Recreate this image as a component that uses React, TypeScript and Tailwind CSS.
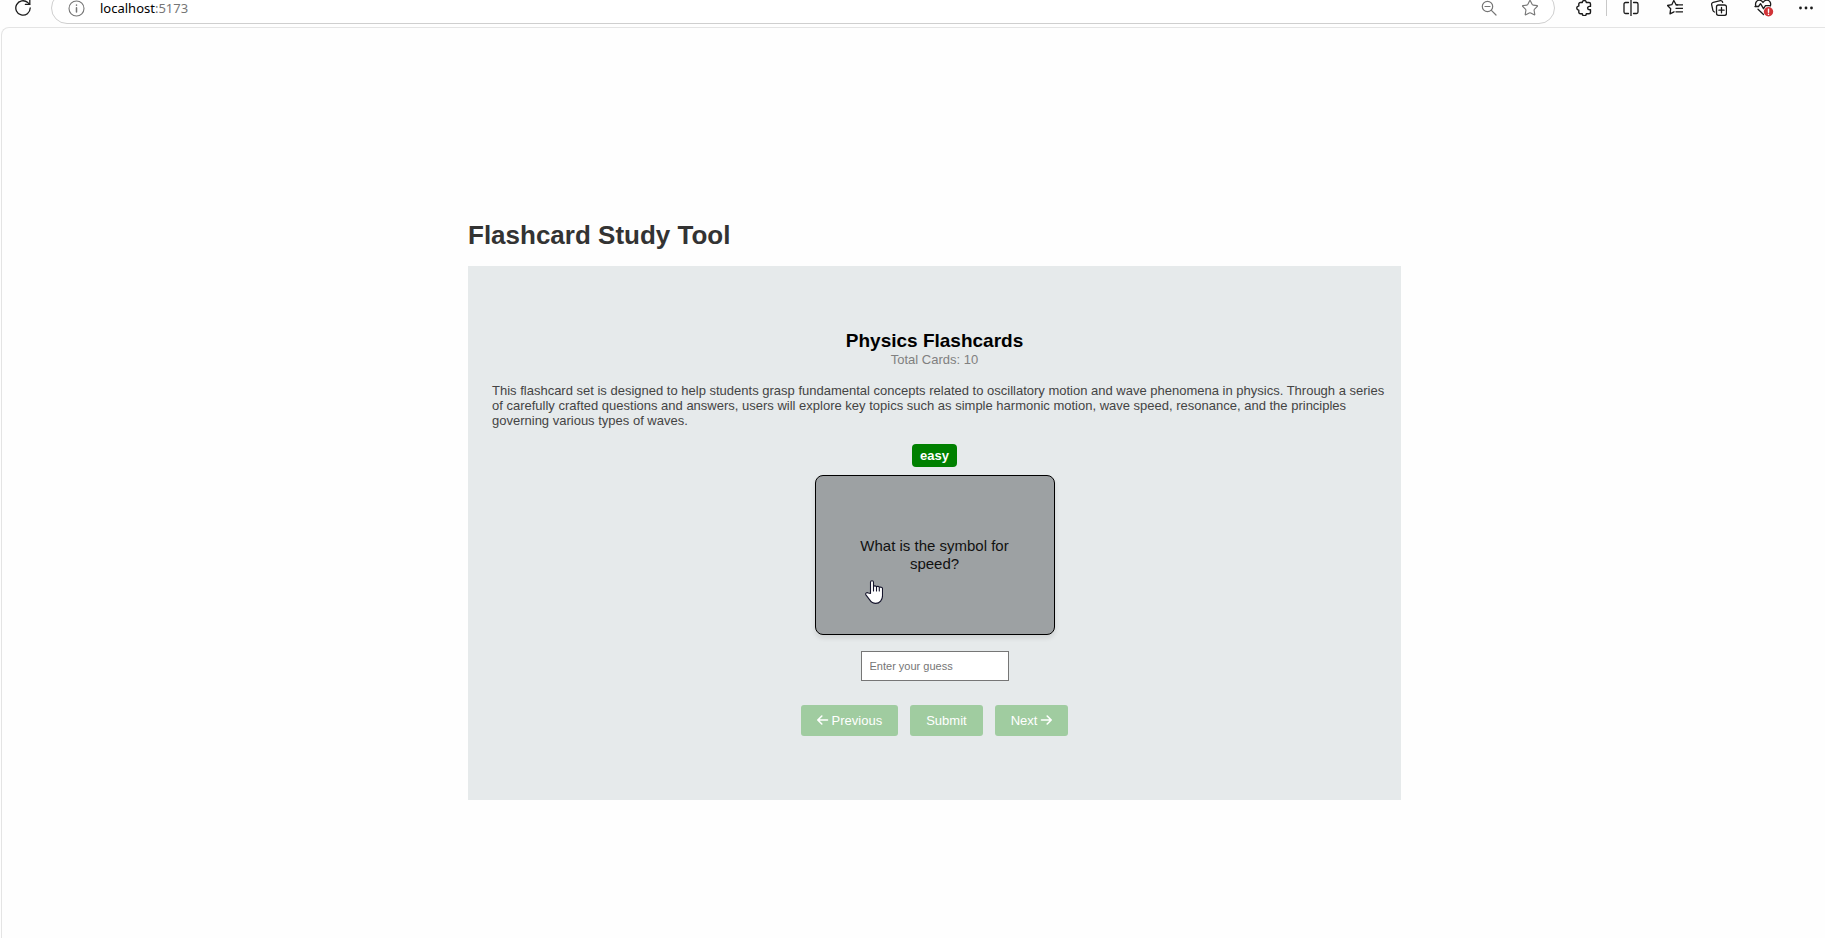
import React from "react";
import { Star } from "lucide-react";

type IconProps = { className?: string };

const stroke = {
  fill: "none",
  stroke: "currentColor",
  strokeLinecap: "round" as const,
  strokeLinejoin: "round" as const,
};

function ReloadIcon({ className }: IconProps) {
  return (
    <svg viewBox="0 0 16 16" className={className} {...stroke} strokeWidth="1.3">
      <path d="M15.2 8a7.2 7.2 0 1 1-2.4-5.4L14.6 4.3" />
      <path d="M14.8 0v4.4H10.4" />
    </svg>
  );
}

function InfoIcon({ className }: IconProps) {
  return (
    <svg viewBox="0 0 17 17" className={className} {...stroke} strokeWidth="1.1">
      <circle cx="8.5" cy="8.5" r="7.5" />
      <path d="M8.5 7.8v4.2M8.5 5v.3" strokeWidth="1.5" />
    </svg>
  );
}

function ZoomOutIcon({ className }: IconProps) {
  return (
    <svg viewBox="0 0 16 16" className={className} {...stroke} strokeWidth="1.2">
      <circle cx="6.5" cy="6.5" r="5.2" />
      <path d="M4 6.5h5M10.4 10.4 15 15" />
    </svg>
  );
}

function PuzzleIcon({ className }: IconProps) {
  return (
    <svg viewBox="0 0 16 16" className={className} {...stroke} strokeWidth="1.4">
      <path d="M4.300 2.500h2a2 2 0 0 1 4 0h2.700a1.500 1.500 0 0 1 1.500 1.500v2.400h-1.200a1.700 1.700 0 0 0 0 3.400h1.200v2.400a1.500 1.500 0 0 1-1.500 1.500h-2.700a2 2 0 0 1-4 0h-2a1.500 1.500 0 0 1-1.500-1.500v-2.100a2 2 0 0 1 0-4V4a1.500 1.500 0 0 1 1.500-1.500z" />
    </svg>
  );
}

function SplitIcon({ className }: IconProps) {
  return (
    <svg viewBox="0 0 16 16" className={className} {...stroke} strokeWidth="1.3">
      <path d="M8 0v16M5.5 2.500H2.500A1.500 1.500 0 0 0 1 4v8a1.500 1.500 0 0 0 1.500 1.500h3M10.500 2.500h3A1.500 1.500 0 0 1 15 4v8a1.500 1.500 0 0 1-1.500 1.500h-3" />
    </svg>
  );
}

function FavoritesIcon({ className }: IconProps) {
  return (
    <svg viewBox="0 0 16 16" className={className} {...stroke} strokeWidth="1.3">
      <path d="M10.5 4.800 9 4.500 6.800.5 4.800 4.700.5 5.500l3.200 3.200L3 13.800l4-2" />
      <path d="M9 4.800h6.500M9 8.300h6.500M9 11.800h6.500" />
    </svg>
  );
}

function CollectionsIcon({ className }: IconProps) {
  return (
    <svg viewBox="0 0 16 16" className={className} {...stroke} strokeWidth="1.3">
      <rect x="5.5" y="5" width="10" height="10.3" rx="2" />
      <path d="M10.5 7.5v5.3M7.9 10.2h5.2" />
      <path d="M3.5 12a2.500 2.500 0 0 1-1.600-1.700L.7 4.800A2 2 0 0 1 2.200 2.300L9.300.7a2 2 0 0 1 2.400 1.600" />
    </svg>
  );
}

function HealthIcon({ className }: IconProps) {
  return (
    <svg viewBox="0 0 20 18" className={className} {...stroke} strokeWidth="1.3">
      <path d="M2 7.500C.5 4 3 1 5.500 1.200 7.500 1.300 8.300 2.500 9 3.500c.7-1 1.700-2.200 3.700-2.300C15.500 1 17.500 4 16.300 7" />
      <path d="M1 7.500h3.500L6.500 4.700l3 5 2-3h4M4 10.300l5.500 5.200" />
      <circle cx="14.5" cy="12.8" r="4.7" fill="#d13438" stroke="none" />
      <path d="M14.5 10.200v3M14.500 15.300v.1" stroke="#fff" strokeWidth="1.4" />
    </svg>
  );
}

function MoreIcon({ className }: IconProps) {
  return (
    <svg viewBox="0 0 16 16" className={className} fill="currentColor">
      <circle cx="2.5" cy="8" r="1.4" />
      <circle cx="8" cy="8" r="1.4" />
      <circle cx="13.5" cy="8" r="1.4" />
    </svg>
  );
}

function LeftArrow({ className }: IconProps) {
  return (
    <svg viewBox="0 0 12 12" className={className} {...stroke} strokeWidth="1.6">
      <path d="M10.500 5H.8M4.800 1 .8 5l4 4" />
    </svg>
  );
}

function RightArrow({ className }: IconProps) {
  return (
    <svg viewBox="0 0 12 12" className={className} {...stroke} strokeWidth="1.6">
      <path d="M1.500 5h9.700M7.200 1l4 4-4 4" />
    </svg>
  );
}

function HandPointer({ className }: IconProps) {
  return (
    <svg viewBox="0 0 18 24" className={className} {...stroke} strokeWidth="1.1">
      <path
        fill="#fff"
        stroke="#14142b"
        d="M5.500 13.500V2.200C5.500.2 8.500.2 8.500 2.200V6.500c.5-1 2.700-.8 3 .3.700-.8 2.500-.5 2.800.6.9-.6 3.200-.2 3.200 1.300v7c0 4-2.700 7.700-6.800 7.700-3.200 0-4.700-1.500-6-3.500L.900 14.800c-.8-1.600 1-2.800 2.400-1.800z"
      />
      <path stroke="#14142b" d="M8.500 6.500v4.500M11.500 7v4M14.300 8v3" />
    </svg>
  );
}

function BrowserBar() {
  const action = "flex w-11 items-center justify-center";
  return (
    <header className="h-[27px] overflow-hidden text-[#1b1b1b]">
      <div className="-mt-2 flex h-8 items-stretch">
        <button aria-label="Reload" className="flex w-[51px] items-center pl-[15px]">
          <ReloadIcon className="size-4" />
        </button>
        <div className="flex flex-1 items-center rounded-full border border-[#cfcfcf] bg-white pr-[15px] pl-4 text-[#767676]">
          <InfoIcon className="size-[17px] shrink-0" />
          <p className="ml-[15px] flex-1 font-['Noto_Sans','Open_Sans',sans-serif] text-[13px] leading-4">
            <span className="text-black">localhost</span>:5173
          </p>
          <button aria-label="Zoom out" className="mr-6">
            <ZoomOutIcon className="size-4" />
          </button>
          <button aria-label="Add to favorites">
            <Star className="size-[18px]" strokeWidth={1.5} />
          </button>
        </div>
        <button aria-label="Extensions" className="ml-[7px] flex w-11 items-center justify-center">
          <PuzzleIcon className="size-4" />
        </button>
        <div className="my-2 mr-[2px] w-px bg-[#c8c8c8]" />
        <button aria-label="Split screen" className={action}>
          <SplitIcon className="size-4" />
        </button>
        <button aria-label="Favorites" className={action}>
          <FavoritesIcon className="size-4" />
        </button>
        <button aria-label="Collections" className={action}>
          <CollectionsIcon className="size-4" />
        </button>
        <button aria-label="Browser essentials" className="flex w-[46px] items-center justify-center">
          <HealthIcon className="h-[18px] w-5" />
        </button>
        <button aria-label="More" className="flex w-[38px] items-center justify-center">
          <MoreIcon className="size-4" />
        </button>
      </div>
    </header>
  );
}

function Flashcards() {
  const button =
    "flex h-[31px] items-center gap-[3px] rounded-[3px] bg-[#a0cca0] px-4 text-[13px] text-white";
  return (
    <section className="flex flex-col items-center bg-[#e6eaeb] px-6 pt-16 pb-16">
      <h2 className="text-[19px] leading-[22px] font-bold text-black">Physics Flashcards</h2>
      <p className="text-[13px] leading-[15px] text-[#808080]">Total Cards: 10</p>
      <p className="mt-4 -mr-5 self-stretch text-[13px] leading-[15px] text-[#444]">
        This flashcard set is designed to help students grasp fundamental concepts related to
        oscillatory motion and wave phenomena in physics. Through a series of carefully crafted
        questions and answers, users will explore key topics such as simple harmonic motion, wave
        speed, resonance, and the principles governing various types of waves.
      </p>
      <span className="mt-4 rounded bg-[#008000] px-2 py-1 text-[13px] leading-[15px] font-bold text-white">
        easy
      </span>
      <button className="relative mt-2 flex h-40 w-60 cursor-pointer items-center justify-center rounded-lg border border-black bg-[#9da1a3] px-8 text-center text-[15px] leading-[18px] text-[#111] shadow-[0_3px_5px_rgba(0,0,0,0.1)]">
        What is the symbol for speed?
        <HandPointer className="absolute top-[104px] left-[49px] h-6 w-[18px]" />
      </button>
      <input
        aria-label="Enter your guess"
        placeholder="Enter your guess"
        className="mt-4 h-[30px] w-[148px] border border-[#767676] bg-white px-2 text-[11px] text-black placeholder:text-[#757575]"
      />
      <div className="mt-6 flex gap-3">
        <button className={button}>
          <LeftArrow className="size-3" />
          Previous
        </button>
        <button className={button}>Submit</button>
        <button className={button}>
          Next
          <RightArrow className="size-3" />
        </button>
      </div>
    </section>
  );
}

export default function App() {
  return (
    <div className="flex min-h-screen flex-col overflow-hidden bg-[#fefefe] font-['Liberation_Sans',Arial,sans-serif]">
      <BrowserBar />
      <main className="ml-px flex flex-1 justify-center rounded-tl-lg border-t border-l border-[#e4e4e4] pt-48 pl-[42px]">
        <div className="w-full max-w-[933px]">
          <h1 className="mb-4 text-[26px] leading-[30px] font-bold text-[#333]">
            Flashcard Study Tool
          </h1>
          <Flashcards />
        </div>
      </main>
    </div>
  );
}
